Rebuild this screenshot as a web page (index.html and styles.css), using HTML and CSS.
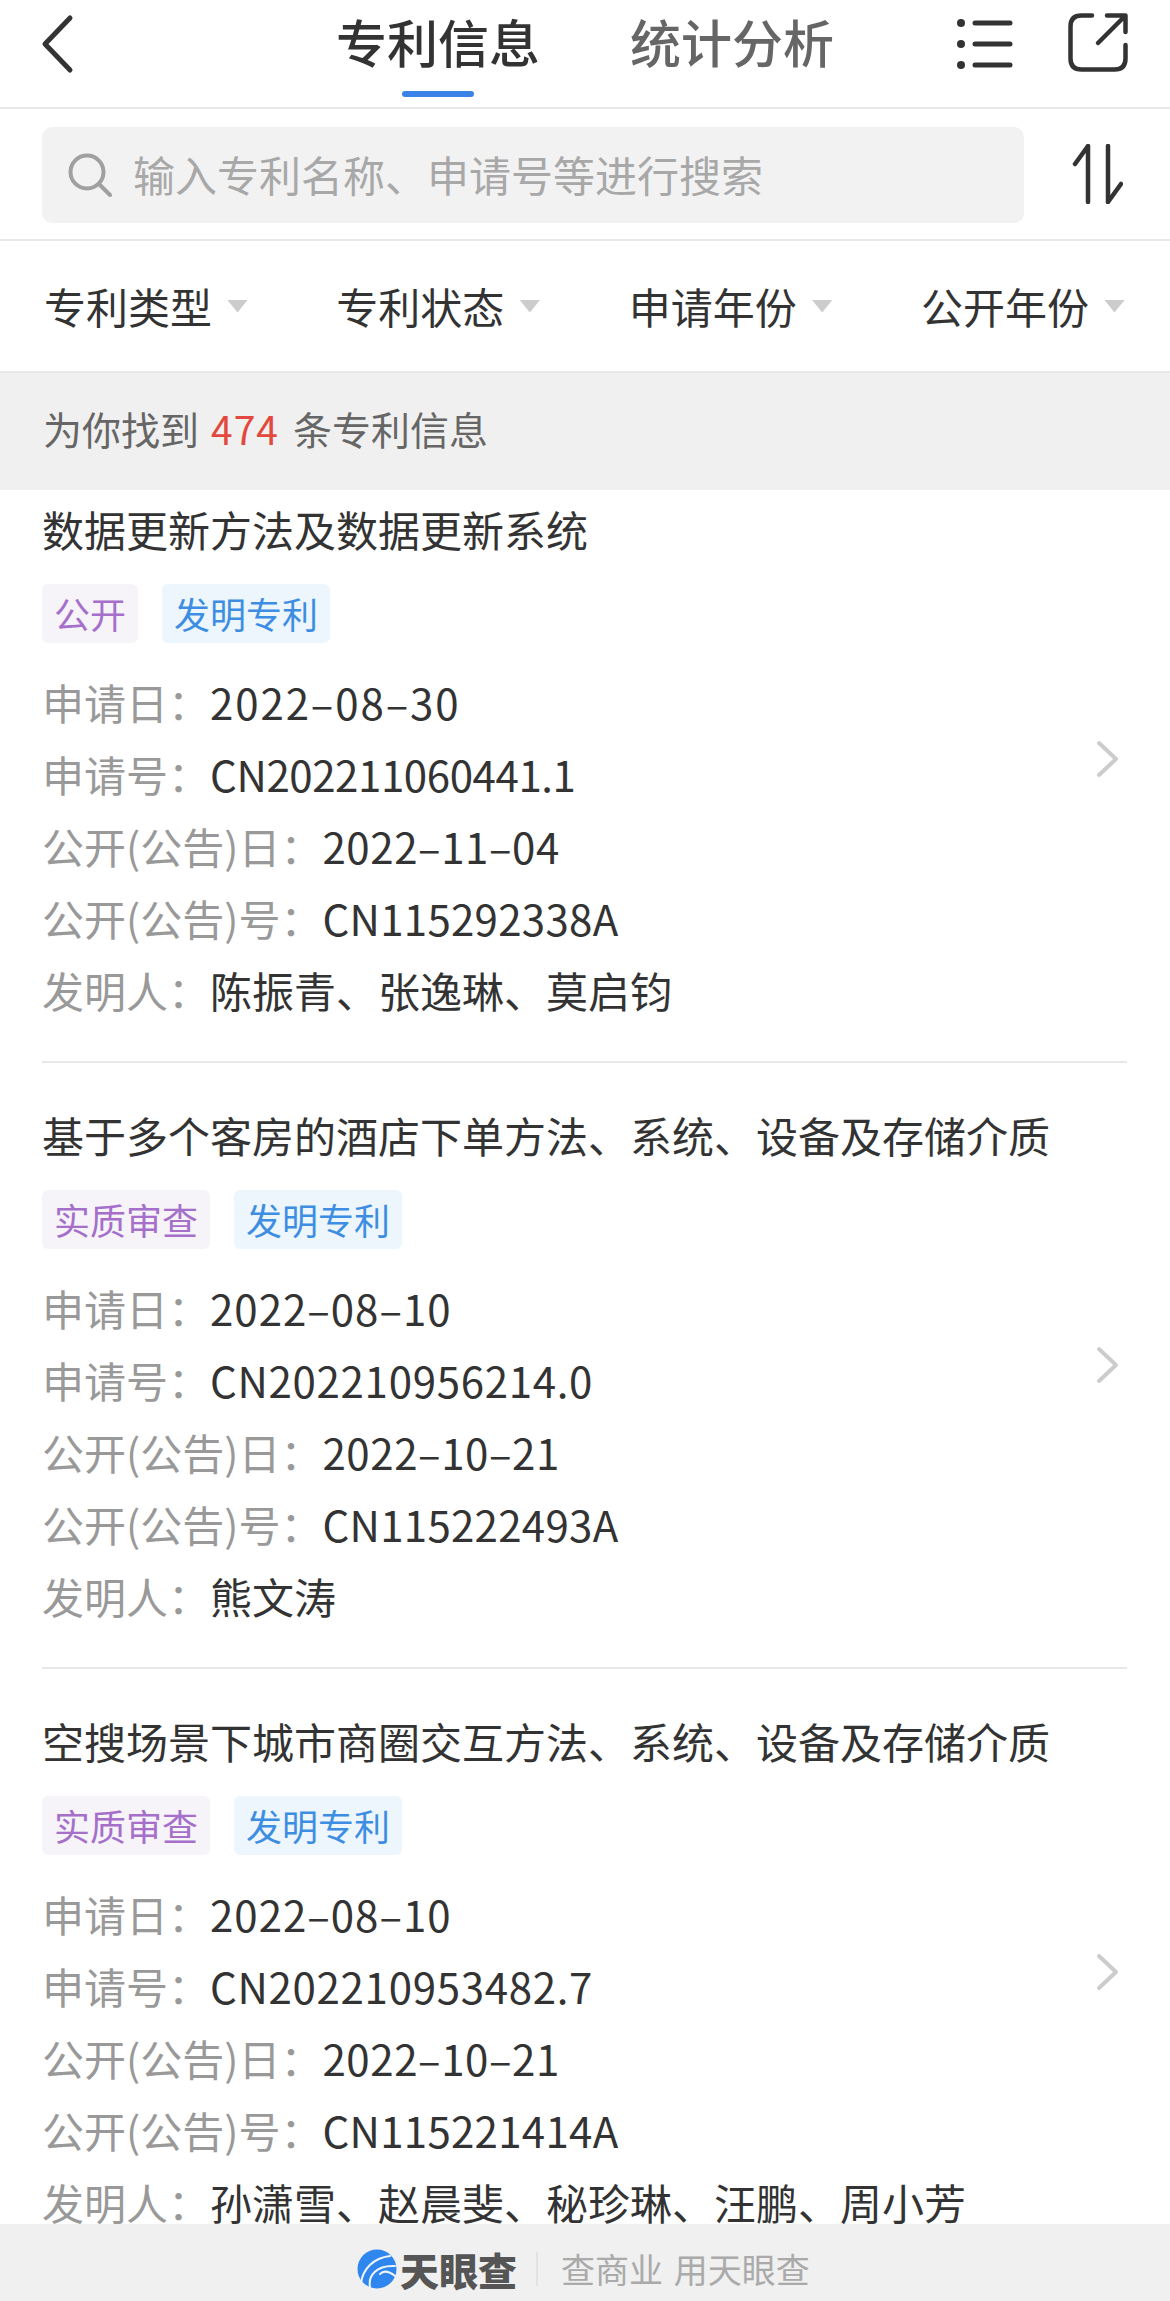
FILE: index.html
```html
<!DOCTYPE html>
<html lang="zh-CN">
<head>
  <meta charset="UTF-8" />
  <title>专利信息</title>
  <link rel="stylesheet" href="styles.css">
</head>
<body>

  <header class="topbar">
    <svg class="back-icon" width="36" height="64" viewBox="0 0 36 64"><path d="M31 6 L6 32 L31 58" /></svg>
    <nav class="tabs">
      <div class="tab active">专利信息</div>
      <div class="tab">统计分析</div>
    </nav>
    <div class="top-actions">
      <svg class="icon" width="60" height="56" viewBox="0 0 60 56">
        <circle class="dot" cx="7" cy="7" r="4" /><circle class="dot" cx="7" cy="28" r="4" /><circle class="dot" cx="7" cy="49" r="4" />
        <path d="M21 7 H56 M21 28 H56 M21 49 H56" />
      </svg>
      <svg class="icon share-icon" width="66" height="66" viewBox="0 0 66 66">
        <path d="M30 4.5 H19.5 Q8.5 4.5 8.5 15.5 V47.5 Q8.5 58.5 19.5 58.5 H52.5 Q63.5 58.5 63.5 47.5 V34" />
        <path d="M36 32 L62 6 M45 4.5 H63.5 V21" />
      </svg>
    </div>
  </header>

  <section class="search-row">
    <div class="search-box">
      <svg class="search-icon" width="44" height="44" viewBox="0 0 44 44">
        <circle cx="19" cy="19" r="16.5" /><path d="M31 31 L42 42" />
      </svg>
      <span>输入专利名称、申请号等进行搜索</span>
    </div>
    <svg class="icon sort-icon" width="52" height="60" viewBox="0 0 52 60">
      <path d="M17 2 V58 M17 2 L4 20" />
      <path d="M37 2 V58 M37 58 L50 40" />
    </svg>
  </section>

  <section class="filters">
    <div class="filter">专利类型<i class="caret"></i></div>
    <div class="filter">专利状态<i class="caret"></i></div>
    <div class="filter">申请年份<i class="caret"></i></div>
    <div class="filter">公开年份<i class="caret"></i></div>
  </section>

  <div class="summary"><span>为你找到<b>474</b>条专利信息</span></div>

  <main class="list">
    <div class="list-inner">

      <article class="item">
        <div class="item-body">
          <h2>数据更新方法及数据更新系统</h2>
          <div class="tags"><span class="tag purple">公开</span><span class="tag blue">发明专利</span></div>
          <div class="row"><label>申请日：</label><span class="date">2022–08–30</span></div>
          <div class="row"><label>申请号：</label><span class="code-narrow">CN202211060441.1</span></div>
          <div class="row"><label>公开(公告)日：</label><span class="date-tight">2022–11–04</span></div>
          <div class="row"><label>公开(公告)号：</label><span class="pub">CN115292338A</span></div>
          <div class="row"><label>发明人：</label>陈振青、张逸琳、莫启钧</div>
        </div>
        <svg class="chevron" width="26" height="38" viewBox="0 0 26 38"><path d="M4 3 L21 19 L4 35" /></svg>
      </article>

      <article class="item">
        <div class="item-body">
          <h2>基于多个客房的酒店下单方法、系统、设备及存储介质</h2>
          <div class="tags"><span class="tag purple">实质审查</span><span class="tag blue">发明专利</span></div>
          <div class="row"><label>申请日：</label><span class="date-mid">2022–08–10</span></div>
          <div class="row"><label>申请号：</label><span class="code">CN202210956214.0</span></div>
          <div class="row"><label>公开(公告)日：</label><span class="date-tight">2022–10–21</span></div>
          <div class="row"><label>公开(公告)号：</label><span class="pub">CN115222493A</span></div>
          <div class="row"><label>发明人：</label>熊文涛</div>
        </div>
        <svg class="chevron" width="26" height="38" viewBox="0 0 26 38"><path d="M4 3 L21 19 L4 35" /></svg>
      </article>

      <article class="item">
        <div class="item-body">
          <h2>空搜场景下城市商圈交互方法、系统、设备及存储介质</h2>
          <div class="tags"><span class="tag purple">实质审查</span><span class="tag blue">发明专利</span></div>
          <div class="row"><label>申请日：</label><span class="date-mid">2022–08–10</span></div>
          <div class="row"><label>申请号：</label><span class="code">CN202210953482.7</span></div>
          <div class="row"><label>公开(公告)日：</label><span class="date-tight">2022–10–21</span></div>
          <div class="row"><label>公开(公告)号：</label><span class="pub">CN115221414A</span></div>
          <div class="row"><label>发明人：</label>孙潇雪、赵晨斐、秘珍琳、汪鹏、周小芳</div>
        </div>
        <svg class="chevron" width="26" height="38" viewBox="0 0 26 38"><path d="M4 3 L21 19 L4 35" /></svg>
      </article>

    </div>
  </main>

  <footer class="footer">
    <svg class="logo" width="40" height="40" viewBox="0 0 40 40">
      <circle cx="20" cy="20" r="19.5" />
      <path d="M4 34 C6 20 16 9 33 7" />
      <path d="M13 38 C11 27 19 16 38 17" />
      <path d="M23 25 C27 21 33 23 38 27" />
    </svg>
    <span class="brand">天眼查</span>
    <span class="sep"></span>
    <span class="slogan">查商业 用天眼查</span>
  </footer>

</body>
</html>
```

FILE: styles.css
```css
* {
  box-sizing: border-box;
}

html, body {
  margin: 0;
  padding: 0;
}

body {
  width: 1170px;
  height: 2301px;
  display: flex;
  flex-direction: column;
  overflow: hidden;
  background: white;
  color: #333;
  font-family: "Noto Sans CJK SC", "Noto Sans", sans-serif;
  font-size: 42px;
}

svg path, svg circle {
  fill: none;
  stroke: #333;
  stroke-width: 5;
  stroke-linecap: round;
  stroke-linejoin: round;
}

svg circle.dot {
  fill: #333;
  stroke: none;
}

.share-icon path, .sort-icon path {
  stroke-width: 4.5;
}

.topbar {
  height: 109px;
  flex: none;
  display: flex;
  align-items: flex-start;
  padding: 12px 42px 0 39px;
  border-bottom: 2px solid #e8e8e8;
}

.back-icon {
  flex: none;
}

.tabs {
  display: flex;
  gap: 90px;
  margin-left: 261px;
}

.tab {
  position: relative;
  height: 64px;
  line-height: 58px;
  font-size: 51px;
  font-weight: 500;
  color: #666;
}

.tab.active {
  color: #333;
}

.tab.active::after {
  content: "";
  position: absolute;
  left: 66px;
  top: 79px;
  width: 72px;
  height: 6px;
  border-radius: 3px;
  background: #3b82e6;
}

.top-actions {
  display: flex;
  align-items: center;
  gap: 48px;
  margin-left: auto;
  height: 64px;
}

.search-row {
  height: 132px;
  flex: none;
  display: flex;
  align-items: center;
  padding: 0 47px 0 42px;
  border-bottom: 2px solid #e8e8e8;
}

.search-box {
  width: 982px;
  height: 96px;
  display: flex;
  align-items: center;
  gap: 21px;
  padding-left: 26px;
  border-radius: 10px;
  background: #f2f2f2;
  color: #a8a8a8;
  margin-top: 2px;
}

.search-box span {
  padding-bottom: 4px;
}

.search-icon circle, .search-icon path {
  stroke: #a0a0a0;
  stroke-width: 4;
}

.sort-icon {
  margin-left: auto;
}

.filters {
  height: 132px;
  flex: none;
  display: flex;
  align-items: center;
  justify-content: space-between;
  padding: 0 45px 0 44px;
  border-bottom: 2px solid #e8e8e8;
}

.filter {
  display: flex;
  align-items: center;
  gap: 15px;
  line-height: 60px;
}

.caret {
  width: 21px;
  height: 13px;
  background: #ccc;
  clip-path: polygon(0 0, 100% 0, 50% 100%);
}

.summary {
  height: 117px;
  flex: none;
  display: flex;
  align-items: center;
  padding-left: 43px;
  background: #f0f0f0;
  color: #666;
  font-size: 39px;
}

.summary span {
  padding-bottom: 8px;
}

.summary b {
  margin: 0 14px 0 12px;
  font-weight: 400;
  letter-spacing: 1px;
  color: #e2483d;
}

.list {
  flex: 1;
  min-height: 0;
}

.list-inner {
  margin-top: -33px;
  padding: 0 43px 0 42px;
}

.item {
  height: 606px;
  display: flex;
  align-items: center;
  justify-content: space-between;
  border-bottom: 2px solid #e8e8e8;
}

.item:last-child {
  border-bottom: none;
}

.item-body {
  align-self: flex-start;
  padding-top: 42px;
}

.item h2 {
  margin: 0 0 25px;
  font-size: 42px;
  font-weight: 400;
  line-height: 60px;
  color: #333;
}

.tags {
  display: flex;
  gap: 24px;
  margin-bottom: 23px;
}

.tag {
  height: 59px;
  line-height: 59px;
  padding: 0 12px;
  border-radius: 6px;
  font-size: 36px;
}

.tag.purple {
  color: #a56fca;
  background: #f6f4f9;
}

.tag.blue {
  color: #3d8ee2;
  background: #edf6fd;
}

.row {
  height: 72px;
  line-height: 72px;
  white-space: nowrap;
  color: #333;
}

.row label {
  color: #999;
}

.date {
  letter-spacing: 1.9px;
}

.date-mid {
  letter-spacing: 1px;
}

.date-tight {
  letter-spacing: 0.6px;
}

.code {
  letter-spacing: 0.7px;
}

.code-narrow {
  letter-spacing: -0.4px;
}

.pub {
  letter-spacing: 0.3px;
}

.chevron path {
  stroke: #ccc;
  stroke-width: 4;
}

.chevron {
  flex: none;
  margin-right: 6px;
}

.footer {
  position: relative;
  height: 77px;
  flex: none;
  display: flex;
  align-items: center;
  padding: 12px 0 0 357px;
  background: #f0f0f0;
}

.logo circle {
  fill: #2f86ee;
  stroke: none;
}

.logo path {
  stroke: #f0f6ff;
  stroke-width: 2;
}

.brand {
  margin-left: 3px;
  font-size: 39px;
  font-weight: 900;
  color: #555;
}

.sep {
  width: 2px;
  height: 34px;
  margin: 0 23px 0 19px;
  background: #e2e2e2;
}

.slogan {
  font-size: 34px;
  word-spacing: 3px;
  color: #aaa;
}
```
